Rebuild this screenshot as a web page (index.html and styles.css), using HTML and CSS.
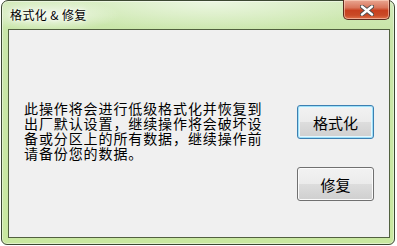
FILE: index.html
```html
<!DOCTYPE html>
<html lang="zh-CN">
<head>
<meta charset="utf-8">
<title>格式化 &amp; 修复</title>
<link rel="stylesheet" href="styles.css">
</head>
<body>
<div class="window">
  <div class="titlebar">
    <span class="title">格式化 &amp; 修复</span>
    <button class="close" aria-label="关闭">
      <svg width="14" height="11" viewBox="0 0 14 11">
        <path d="M2 1.5 L12 9.5 M12 1.5 L2 9.5" stroke="#4d4d4d" stroke-width="4.2" stroke-linecap="round" fill="none"/>
        <path d="M2 1.5 L12 9.5 M12 1.5 L2 9.5" stroke="#ffffff" stroke-width="2.4" stroke-linecap="round" fill="none"/>
      </svg>
    </button>
  </div>
  <div class="client">
    <p class="message">此操作将会进行低级格式化并恢复到<br>出厂默认设置，继续操作将会破坏设<br>备或分区上的所有数据，继续操作前<br>请备份您的数据。</p>
    <div class="actions">
      <button class="btn default">格式化</button>
      <button class="btn">修复</button>
    </div>
  </div>
</div>
</body>
</html>
```
FILE: styles.css
```css
html, body {
  margin: 0;
  padding: 0;
  background: #ffffff;
}

body {
  font-family: "Noto Sans CJK SC", "Microsoft YaHei", sans-serif;
}

.window {
  box-sizing: border-box;
  margin-left: 1px;
  width: 394px;
  height: 245px;
  border: 1px solid #3c4832;
  border-radius: 7px 7px 6px 6px;
  padding: 0 4px 6px 6px;
  display: flex;
  flex-direction: column;
  background:
    radial-gradient(ellipse 70px 16px at 48px 14px, rgba(255,255,255,0.75), rgba(255,255,255,0) 100%),
    radial-gradient(ellipse 160px 30px at 210px 2px, rgba(255,255,255,0.55), rgba(255,255,255,0) 100%),
    linear-gradient(180deg, #d3ebbb 0px, #c9e6a9 28px, #c9e8a0 100%);
  box-shadow: inset 0 0 0 1px rgba(255,255,255,0.45);
}

.titlebar {
  height: 28px;
  display: flex;
  align-items: flex-start;
  flex: none;
}

.title {
  padding: 6px 0 0 2px;
  font-size: 12px;
  line-height: 16px;
  letter-spacing: 0.4px;
  color: #000000;
  text-shadow: 0 0 6px #ffffff, 0 0 3px #ffffff;
}

.close {
  margin-left: auto;
  margin-top: -1px;
  width: 47px;
  height: 20px;
  padding: 0;
  border: 1px solid #5b2a1e;
  border-top: none;
  border-radius: 0 0 5px 5px;
  background: linear-gradient(180deg, #e9a692 0%, #d9765c 40%, #c8401f 55%, #c94a26 80%, #e0714a 100%);
  box-shadow: inset 0 0 0 1px rgba(255,220,200,0.55);
  display: flex;
  align-items: center;
  justify-content: center;
}

.close svg {
  display: block;
  margin-top: 2px;
}

.client {
  flex: 1;
  border: 1px solid #51603f;
  background: #f0f0f0;
  display: flex;
  align-items: flex-start;
}

.message {
  margin: 0;
  padding: 71px 0 0 15px;
  font-size: 14px;
  line-height: 15px;
  letter-spacing: 0.9px;
  color: #000000;
  white-space: nowrap;
}

.actions {
  margin-left: auto;
  margin-right: 15px;
  padding-top: 75px;
  display: flex;
  flex-direction: column;
  gap: 28px;
}

.btn {
  box-sizing: border-box;
  width: 77px;
  height: 34px;
  padding: 0;
  border: 1px solid #707070;
  border-radius: 3px;
  background: linear-gradient(180deg, #f2f2f2 0%, #ebebeb 50%, #dddddd 50%, #cfcfcf 100%);
  box-shadow: inset 0 0 0 1px #fbfbfb;
  font-family: "Noto Sans CJK SC", "Microsoft YaHei", sans-serif;
  font-size: 15px;
  line-height: 15px;
  color: #000000;
}

.btn.default {
  border-color: #3c7fb1;
  box-shadow: inset 0 0 0 1px #9ee0f8, inset 0 0 0 2px #e6f6fd;
}
```
